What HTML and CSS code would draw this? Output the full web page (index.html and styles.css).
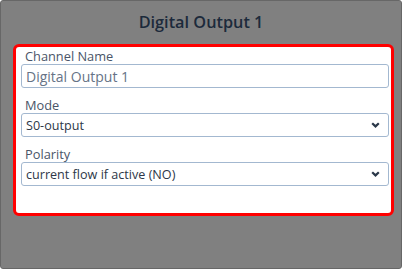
FILE: index.html
```
<!DOCTYPE html>
<html>
<head>
<meta charset="utf-8">
<link rel="stylesheet" href="styles.css">
</head>
<body>
<div class="frame">
  <div class="title">Digital Output 1</div>
  <div class="panel">
    <div class="field">
      <label class="lbl">Channel Name</label>
      <input class="ctl txt" type="text" placeholder="Digital Output 1">
    </div>
    <div class="field">
      <label class="lbl">Mode</label>
      <div class="ctl sel">
        <span>S0-output</span>
        <svg class="chev" width="9" height="6" viewBox="0 0 9 6"><path d="M1.2 1.2 L4.5 4.4 L7.8 1.2" fill="none" stroke="#2a3849" stroke-width="2.2"/></svg>
      </div>
    </div>
    <div class="field">
      <label class="lbl">Polarity</label>
      <div class="ctl sel">
        <span>current flow if active (NO)</span>
        <svg class="chev" width="9" height="6" viewBox="0 0 9 6"><path d="M1.2 1.2 L4.5 4.4 L7.8 1.2" fill="none" stroke="#2a3849" stroke-width="2.2"/></svg>
      </div>
    </div>
  </div>
</div>
</body>
</html>
```

FILE: styles.css
```
body {
margin:0;
font-family:"Open Sans","Noto Sans",sans-serif;
}
.frame {
width:402px;
height:269px;
box-sizing:border-box;
border:1px solid #676767;
border-radius:3px;
background-color:#808080;
padding:0 0 0 12px;
}
.title {
height:43px;
line-height:42px;
text-align:center;
font-size:16.3px;
font-weight:600;
color:#1c2a3b;
padding-right:12px;
}
.panel {
width:381px;
height:172px;
box-sizing:border-box;
border:3px solid #ff0000;
border-radius:6px;
background-color:#ffffff;
padding:1px 2px 0 5px;
}
.field {
margin-bottom:9px;
}
.lbl {
display:block;
height:16px;
line-height:16px;
font-size:12.8px;
color:#4a5568;
padding-left:4px;
}
.ctl {
display:block;
width:368px;
height:24px;
box-sizing:border-box;
border:1px solid #a3b8d0;
border-radius:3px;
padding:0 4px;
font-family:"Open Sans","Noto Sans",sans-serif;
font-size:13px;
color:#2d3748;
background-color:#ffffff;
outline:none;
}
.txt {
font-size:14px;
}
.txt::placeholder {
color:#667386;
opacity:1;
}
.sel {
display:flex;
align-items:center;
justify-content:space-between;
padding-right:8px;
font-size:12.6px;
}
.chev {
display:block;
}
```
